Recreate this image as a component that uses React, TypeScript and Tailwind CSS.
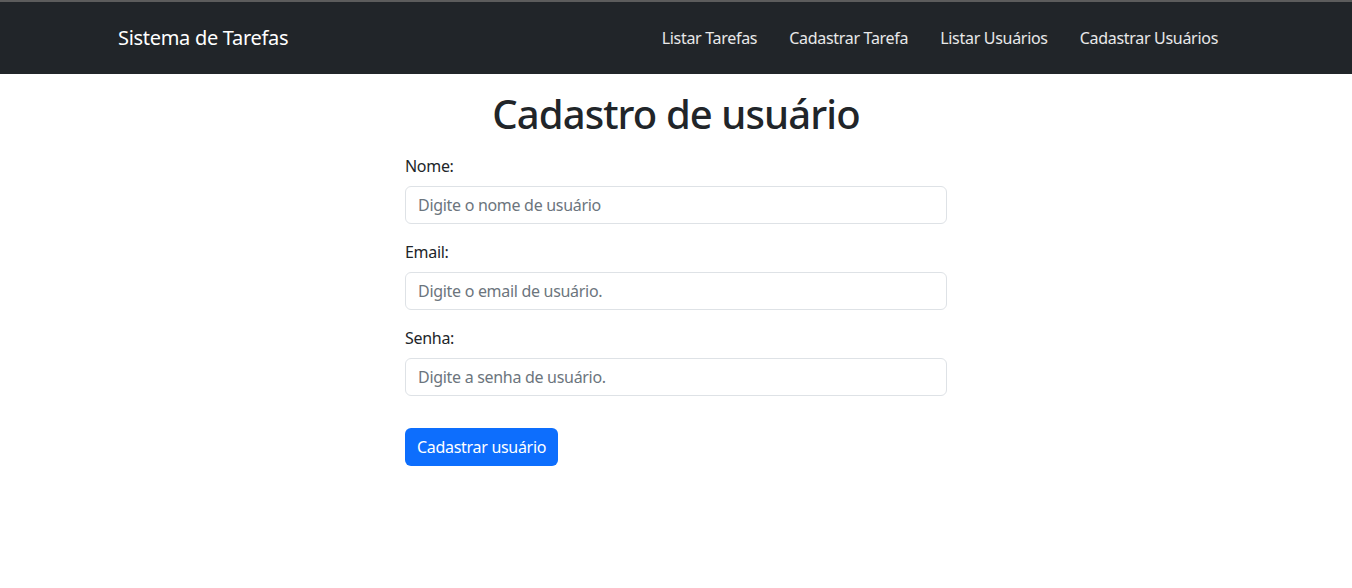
const fontStack = { fontFamily: '"Noto Sans", "Open Sans", sans-serif' };

function Field({ label, placeholder, type }: { label: string; placeholder: string; type: string }) {
  return (
    <div className="mb-4">
      <label className="mb-2 block text-base leading-6 text-[#212529]">{label}</label>
      <input
        type={type}
        placeholder={placeholder}
        className="block h-[38px] w-full rounded-md border border-[#dee2e6] bg-white px-3 text-base tracking-[-0.3px] text-[#212529] placeholder:text-[#6c757d] outline-none"
      />
    </div>
  );
}

export default function App() {
  const links = ["Listar Tarefas", "Cadastrar Tarefa", "Listar Usuários", "Cadastrar Usuários"];

  return (
    <div className="min-h-screen bg-white tracking-[-0.3px]" style={fontStack}>
      {/* Navbar */}
      <nav className="h-[74px] border-t-2 border-[#5c5c5c] bg-[#212529]">
        <div className="mx-auto flex h-full max-w-[1140px] items-center justify-between px-3">
          <span className="text-xl text-white">Sistema de Tarefas</span>
          <ul className="flex items-center">
            {links.map((l) => (
              <li key={l} className="px-4 text-base text-white/90">
                {l}
              </li>
            ))}
          </ul>
        </div>
      </nav>

      {/* Form */}
      <div className="mx-auto w-[542px]">
        <h1 className="mb-4 mt-4 text-center text-[40px] font-medium leading-[48px] tracking-[-0.9px] text-[#212529]">
          Cadastro de usuário
        </h1>
        <Field label="Nome:" placeholder="Digite o nome de usuário" type="text" />
        <Field label="Email:" placeholder="Digite o email de usuário." type="email" />
        <Field label="Senha:" placeholder="Digite a senha de usuário." type="password" />
        <button className="mt-4 h-[38px] rounded-md bg-[#0d6efd] px-3 text-base text-white">
          Cadastrar usuário
        </button>
      </div>
    </div>
  );
}
